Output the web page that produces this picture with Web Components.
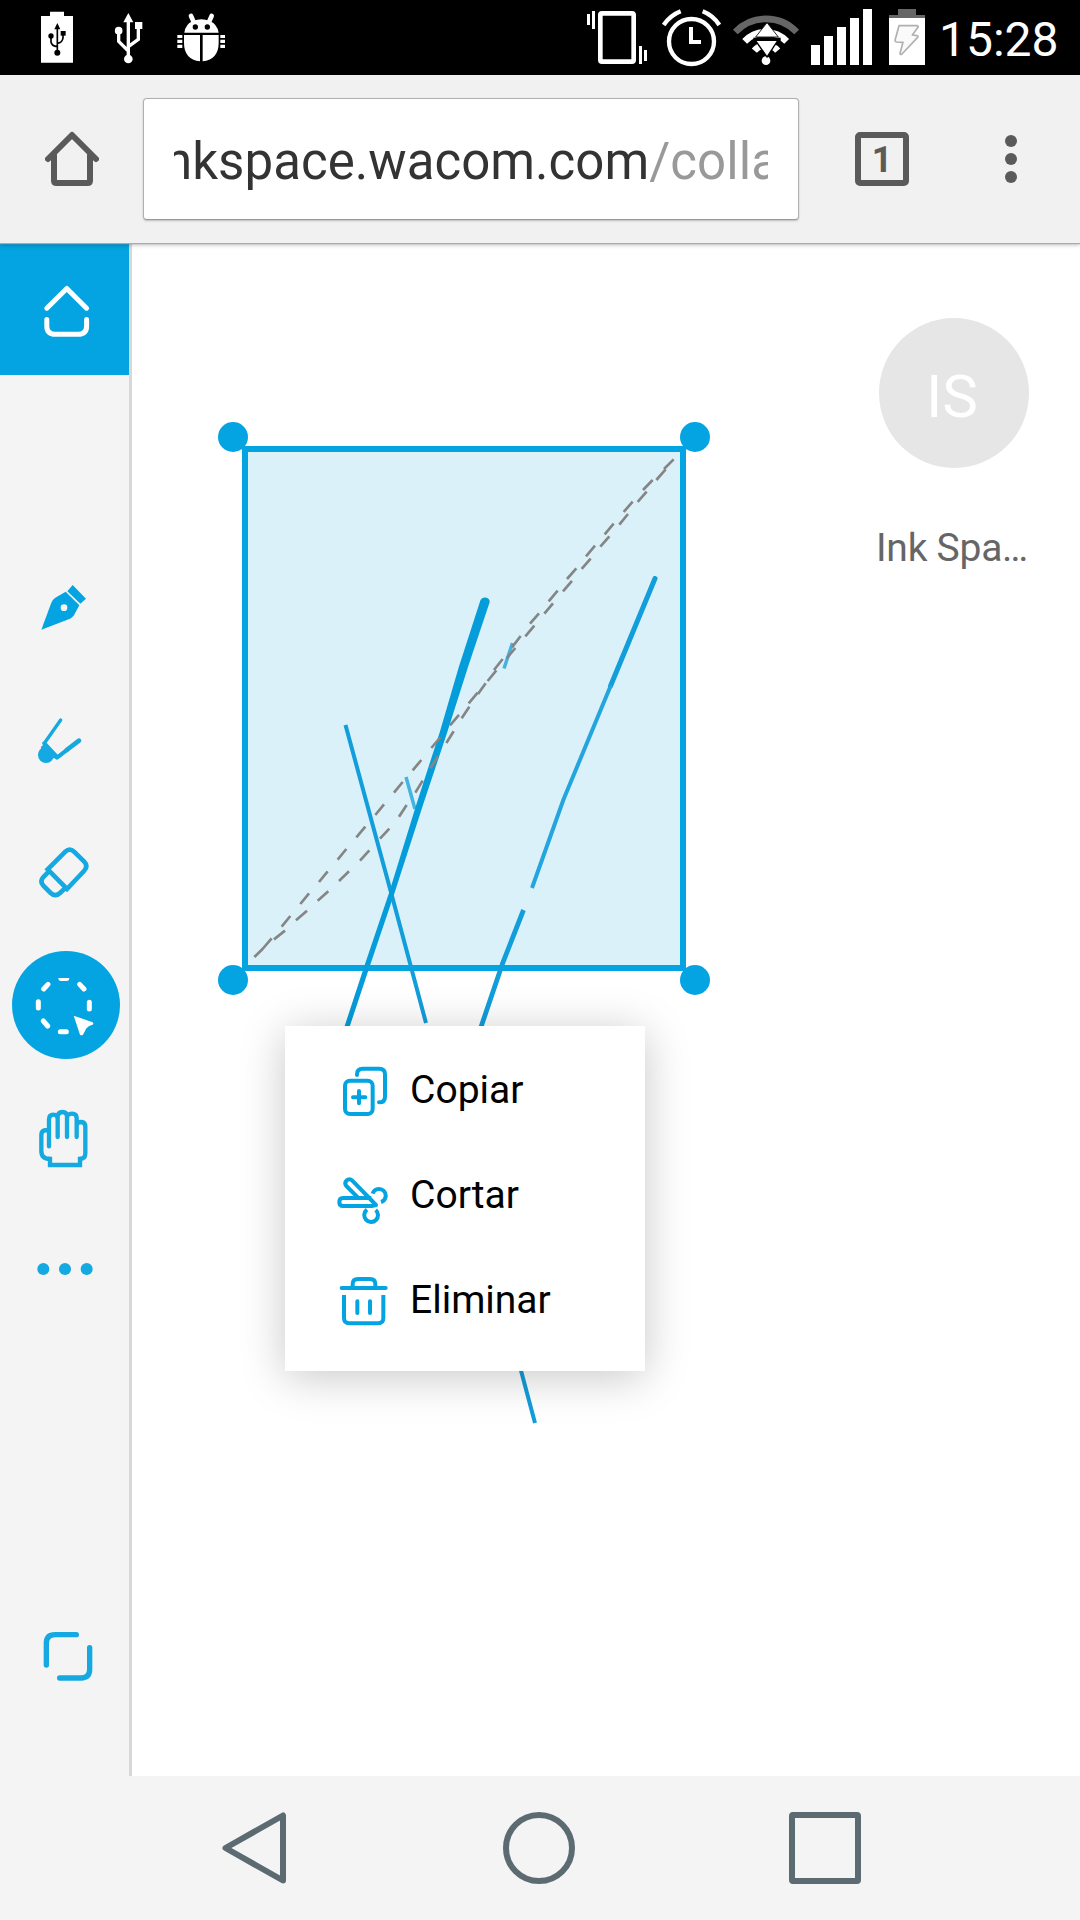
<!DOCTYPE html>
<html lang="es">
<head>
<meta charset="utf-8">
<title>Ink Space</title>
<style>
html,body{margin:0;padding:0}
body{width:1080px;height:1920px;overflow:hidden;background:#fff;font-family:Roboto,"Noto Sans",sans-serif}
</style>
</head>
<body>
<phone-screen>
  <status-bar time="15:28"></status-bar>
  <browser-bar tabs="1"><span slot="host">nkspace.wacom.com</span><span slot="path">/colla</span></browser-bar>
  <ink-workspace>
    <tool-bar slot="tools"></tool-bar>
    <ink-canvas slot="canvas">
      <user-badge slot="user" initials="IS">Ink Spa…</user-badge>
      <context-menu slot="menu">
        <menu-row icon="copy">Copiar</menu-row>
        <menu-row icon="cut">Cortar</menu-row>
        <menu-row icon="trash">Eliminar</menu-row>
      </context-menu>
    </ink-canvas>
  </ink-workspace>
  <nav-bar></nav-bar>
</phone-screen>
<script>
// name: [width px, height px, viewBox, markup]
const ICONS = {
  usbBattery: [34,75,'120 0 102 225', `<path fill="#fff" d="M123 48h27V35h42v13h27v140h-96z"/><g fill="none" stroke="#000" stroke-width="5"><path d="M172 82v76M153 108v18q2 12 19 14M189 100v14q-2 14-17 16"/></g><path d="M172 69l9 19h-18z"/><circle cx="153" cy="108" r="8"/><path d="M182 93h15v14h-15z"/><circle cx="172" cy="158" r="9"/>`],
  usb: [29,75,'342 0 87 225', `<g fill="none" stroke="#fff" stroke-width="10"><path d="M385 62v112M356 92v32l29 29M415 84v34l-30 22"/></g><g fill="#fff"><path d="M385 39l15 28h-30z"/><circle cx="356" cy="92" r="11.500"/><path d="M405 66h22v21h-22z"/><circle cx="385" cy="177" r="13"/></g>`],
  bug: [50,75,'528 0 150 225', `<g fill="#fff"><path d="M553 98Q556 72 580 62Q604 53 628 62Q652 72 656 98zM552 105h48v79Q552 178 552 128zM608 105h48v23Q656 178 608 184z"/><path d="M532 105h15v9h-15zM532 119h15v10h-15zM532 134h15v10h-15zM661 105h14v9h-14zM661 119h14v10h-14zM661 134h14v10h-14z"/></g><path d="M573 48l9 20M635 48l-9 20" stroke="#fff" stroke-width="14" stroke-linecap="round"/><circle cx="586" cy="81" r="8"/><circle cx="622" cy="81" r="8"/>`],
  vibrate: [62,75,'78 0 186 225', `<rect x="121" y="40" width="100" height="145" rx="5" fill="none" stroke="#fff" stroke-width="14"/><path fill="#fff" d="M81 42h9v33h-9zM96 33h9v54h-9zM237 138h9v54h-9zM252 150h9v33h-9z"/>`],
  alarm: [61,75,'303 0 183 225', `<g fill="none" stroke="#fff"><circle cx="394.500" cy="124.500" r="67.500" stroke-width="13"/><path stroke-width="12" d="M393 81v45h30"/><path stroke-width="13" d="M311 75Q331 46 362 34M428 34Q459 46 478 75"/></g>`],
  wifi: [68,75,'516 0 204 225', `<g fill="none" stroke-width="20"><path stroke="#666" d="M526 96A127 127 0 0 1 710 96"/><path stroke="#fff" d="M554 124A87 87 0 0 1 680 124"/><path stroke="#fff" d="M583 152A46 46 0 0 1 653 152"/></g><circle cx="618" cy="182" r="13" fill="#fff"/><path d="M580 113h82v9h-82z"/><path fill="#fff" stroke="#222" stroke-width="3" d="M621 68l34 43h-68z"/><path stroke="#000" stroke-width="10" d="M591 123h58l-28 43z"/><path fill="#fff" d="M590 123h60l-29 44z"/>`],
  signal: [63,75,'750 0 189 225', `<path fill="#fff" d="M753 135h27v60h-27zM792 108h27v87h-27zM831 81h27v114h-27zM870 54h27v141h-27zM909 27h27v168h-27z"/>`],
  battery: [38,75,'984 0 114 225', `<path fill="#666" d="M1014 27h54v18h27v9H987v-9h27z"/><path fill="#fff" d="M987 54h108v141H987z"/><path fill="#fafafa" stroke="#b0b0b0" stroke-width="5" stroke-linejoin="round" d="M1017 77h54q5 0 3 5l-17 23 14 2q5 1 2 5l-47 50q-5 4-6-2l9-33-20-1q-4-1-4-5z"/>`],
  home: [54,56,'45 131 54 56', `<path fill="none" stroke="#5a5a5a" stroke-width="6" stroke-linejoin="round" stroke-linecap="round" d="M48 159l24-24 24 24M54 155v25.500q0 2.500 2.500 2.500h31q2.500 0 2.500-2.500V155"/>`],
  inkHome: [129,132,'0 243 129 132', `<path fill="none" stroke="#fff" stroke-width="5" stroke-linejoin="round" stroke-linecap="round" d="M46.800 308.200L66.800 288.500l19.800 19.700M46.800 319.500v6.500q0 8.300 8.500 8.300h22.800q8.500 0 8.500-8.300v-6.500"/>`],
  pen: [129,132,'0 -60 387 396', `<g fill="#03a4e1"><path d="M124 209L154 128Q158 118 166 113L197 95l41 41-17 31Q217 172 210 176z"/><path d="M218 75l40 41-17 15-39-37z"/></g><circle cx="192" cy="143" r="10" fill="#f4f4f4"/>`],
  brush: [129,132,'0 336 387 396', `<g fill="#14a9e0"><circle cx="138" cy="585" r="24"/><path d="M126 548l8-6 42 45-6 12-8-5-22 8-18-40 8-8z"/></g><g stroke="#14a9e0" stroke-linecap="round"><path stroke-width="10" d="M182 480l-50 71"/><path stroke-width="12" d="M172 592l30-23"/><path stroke-width="14" d="M200 570l37-28"/></g>`],
  eraser: [129,132,'0 732 387 396', `<g fill="none" stroke="#14a9e0" stroke-width="14"><path stroke-linecap="round" d="M143 928L196 875Q209 862 222 875L252 904Q266 918 252 933L201 987z"/><path d="M149 932L130 951Q118 964 130 977L152 999Q166 1012 180 999L196 984"/></g>`],
  select: [129,132,'0 48 387 396', `<circle cx="198" cy="255" r="162" fill="#03a4e1"/><g stroke="#fff" stroke-width="15" stroke-linecap="round"><path d="M268 247v20M181 335h18M115 245v19M131 207l13-14M239 193l13 14M130 303l13 15"/></g><path fill="#fff" d="M175 174h33q0 9-8 9h-17q-8 0-8-9zM221 287l57 20q4 4 0 7-15 4-20 13l-9 17q-5 4-9 0z"/>`],
  hand: [129,132,'0 444 387 396', `<g fill="none" stroke="#14a9e0" stroke-width="13"><path stroke-linecap="round" stroke-linejoin="round" d="M147 679V598Q147 584 160 584Q173 584 173 596V651V590Q174 576 187 576Q201 576 201 590V651V594Q201 581 216 581Q230 581 230 594V651V614Q234 606 244 606Q256 607 256 620V700Q256 717 240 717M150 717Q124 717 124 693V645Q124 630 141 630"/><path d="M144 717h6v18h90v-18h6"/></g>`],
  dots: [129,132,'0 840 387 396', `<g fill="#14a9e0"><circle cx="130" cy="1047" r="18"/><circle cx="195" cy="1047" r="18"/><circle cx="260" cy="1047" r="18"/></g>`],
  expand: [129,132,'0 -30 387 396', `<path fill="none" stroke="#14a9e0" stroke-width="16" stroke-linecap="round" d="M139 195V130Q139 104 165 104H229M269 143V208Q269 234 243 234H179"/>`],
  copy: [57,57,'195 156 171 171', `<g fill="none" stroke="#03a4e1" stroke-width="12" stroke-linecap="round"><rect x="225" y="212" width="83" height="100" rx="15"/><path d="M267 243v37M249 262h37M261 195v-2Q261 176 278 176H328Q345 176 345 193V260Q345 277 327 277"/></g>`],
  cut: [57,57,'195 471 171 171', `<g fill="none" stroke="#03a4e1" stroke-width="12" stroke-linejoin="round"><path d="M264 563L229 528Q222 519 230 511Q239 504 247 512L318 585 305 588H219Q208 588 208 576Q208 564 219 564H304"/><path d="M308 551A20 20 0 1 1 333 576M291 599A20.500 20.500 0 1 0 317 600"/></g>`],
  trash: [57,57,'195 786 171 171', `<g fill="none" stroke="#03a4e1" stroke-width="12"><path stroke-linecap="round" d="M215 834H347M262 874v35M300 874v35"/><path d="M248 832V823Q248 807 264 807H300Q316 807 316 823V832M222 855V924Q222 940 238 940H324Q340 940 340 924V855"/></g>`],
  back: [64,72,'222 1812 64 72', `<path fill="none" stroke="#5c6a72" stroke-width="6" stroke-linejoin="round" d="M225.500 1848L283 1815.500v65z"/>`],
  circle: [72,72,'0 0 72 72', `<circle cx="36" cy="36" r="33" fill="none" stroke="#5c6a72" stroke-width="6"/>`],
  square: [72,72,'0 0 72 72', `<rect x="3" y="3" width="66" height="66" rx="1" fill="none" stroke="#5c6a72" stroke-width="6" stroke-linejoin="round"/>`]
};
class Base extends HTMLElement {
  constructor(){ super(); this.attachShadow({mode:'open'}); }
  connectedCallback(){ this.shadowRoot.innerHTML = this.view(); }
}
const def = (name, view) => customElements.define(name, class extends Base { view(){ return view(this); } });

def('ui-icon', el => { const [w,h,vb,m] = ICONS[el.getAttribute('name')];
  return `<style>:host{display:block;flex:none}svg{display:block}</style><svg width="${w}" height="${h}" viewBox="${vb}">${m}</svg>`; });

def('phone-screen', () => `<style>:host{display:flex;flex-direction:column;width:1080px;height:1920px}</style><slot></slot>`);

def('status-bar', el => `<style>
:host{display:flex;justify-content:space-between;height:75px;flex:none;background:#000;color:#fff}
div{display:flex}
.l{padding-left:40px}.l :nth-child(2){margin-left:40px}.l :nth-child(3){margin-left:33px}
.r{width:494px}
.g1{margin-left:13px}.g2{margin-left:10px}.g3{margin-left:15px}
span{font-size:48px;line-height:79px;margin-left:13px;white-space:nowrap}
</style>
<div class="l"><ui-icon name="usbBattery"></ui-icon><ui-icon name="usb"></ui-icon><ui-icon name="bug"></ui-icon></div>
<div class="r"><ui-icon name="vibrate"></ui-icon><ui-icon class="g1" name="alarm"></ui-icon><ui-icon class="g2" name="wifi"></ui-icon><ui-icon class="g2" name="signal"></ui-icon><ui-icon class="g3" name="battery"></ui-icon><span>${el.getAttribute('time')}</span></div>`);

def('browser-bar', el => `<style>
:host{display:flex;align-items:center;height:168px;flex:none;box-sizing:border-box;background:#f1f1f1;padding:0 63px 0 45px;box-shadow:0 1px 1px #aaa,0 2px 4px rgba(0,0,0,.25);position:relative;z-index:2}
.url{box-sizing:border-box;width:656px;height:122px;margin-left:44px;border:1px solid #b0b0b0;border-bottom-color:#999;border-radius:4px;background:#fff;padding:0 30px;box-shadow:0 1px 2px rgba(0,0,0,.22)}
.clip{overflow:hidden;height:120px;line-height:125px;font-size:51px;letter-spacing:.05px;white-space:nowrap;color:#333}
.txt{margin-left:-10px;display:block}
.path{color:#999}
.tab{box-sizing:border-box;width:54px;height:54px;border:6px solid #5a5a5a;border-radius:5px;margin-left:56px;font:bold 36px/44px Roboto,sans-serif;color:#5a5a5a;text-align:center}
.more{display:flex;flex-direction:column;gap:6px;margin-left:96px}
.more i{width:12px;height:12px;border-radius:50%;background:#5a5a5a}
</style><ui-icon name="home"></ui-icon>
<div class="url"><div class="clip"><span class="txt"><slot name="host"></slot><span class="path"><slot name="path"></slot></span></span></div></div>
<div class="tab">${el.getAttribute('tabs')}</div><div class="more"><i></i><i></i><i></i></div>`);

def('ink-workspace', () => `<style>:host{display:flex;height:1533px;flex:none}</style><slot name="tools"></slot><slot name="canvas"></slot>`);

def('tool-bar', () => `<style>
:host{display:flex;flex-direction:column;box-sizing:border-box;width:132px;flex:none;background:#f4f4f4;border-right:3px solid #d8d8d8}
.home{background:#03a4e1;margin-bottom:165px}.full{margin-top:auto;margin-bottom:54px}
</style><ui-icon class="home" name="inkHome"></ui-icon>
${['pen','brush','eraser','select','hand','dots'].map(n=>`<ui-icon name="${n}"></ui-icon>`).join('')}
<ui-icon class="full" name="expand"></ui-icon>`);

def('ink-canvas', () => {
  // The two sides of the lasso outline, in thirds of a pixel.
  const upper = 'M1421 178L1392 207M1358 240L1329 270M1298 305L1271 336M1241 371L1214 403M1185 437L1158 469M1129 505L1101 537M1073 572L1046 604M1017 640L990 671M962 708L936 742M908 777L882 810M857 850L834 882M808 920L785 955M761 994L739 1029M714 1069L691 1105M668 1142L646 1178M620 1215L597 1250M568 1286L540 1316M508 1351L480 1382M447 1414L417 1443M385 1474L353 1502M321 1532L288 1561M255 1592L222 1618M187 1648L163 1671';
  const lower = 'M1397 208L1369 240M1340 275L1313 306M1284 342L1258 374M1228 409L1201 440M1172 476L1145 507M1116 543L1089 574M1059 610L1033 641M1003 677L976 709M946 744L920 775M889 811L863 843M833 878L806 910M777 945L750 976M721 1012L694 1044M664 1080L638 1111M608 1146L582 1178M552 1213L526 1245M496 1280L469 1312M439 1347L413 1379M383 1414L357 1446M327 1480L301 1512M271 1548L245 1580M215 1615L185 1650';
  return `<style>
:host{display:block;width:948px;position:relative;background:#fff;overflow:hidden}
svg{display:block}
.ink{filter:blur(.7px)}
.user{display:flex;justify-content:flex-end;position:absolute;right:51px;top:75px}
.menu{position:absolute;left:153px;top:783px}
</style>
<svg width="948" height="1533" viewBox="132 243 948 1533">
<rect x="245" y="449" width="438" height="519" fill="#daf1fa" stroke="#03a4e1" stroke-width="6"/>
<g class="ink"><g fill="none" stroke="#129ddb" stroke-linecap="butt">
<path stroke-width="4" d="M345.500 725L392 896 426 1023"/>
<path stroke-width="3.500" stroke="#45b3e2" d="M406 777l9 32M512.500 643L504 668.500"/>
<path stroke-width="5" stroke-linecap="round" d="M655 578.500L610.500 686"/>
<path stroke-width="4" stroke="#25a5dd" d="M611 685L563.300 800 532 888"/>
<path stroke-width="4.800" d="M523.500 910L502.700 963 481 1027"/>
<path stroke-width="4" d="M519.500 1365L535 1423"/>
</g>
<path fill="#059cda" d="M480.500 600Q482 597 485.500 597.500Q489.700 598 489.700 602L468 667 447 733 423.300 804 394.500 893 369.500 967 349.200 1028H344L364 967 389 893 416.800 803 439.500 733 458.800 667z"/></g>
<g transform="translate(200 400) scale(.33333)" fill="none" stroke="#858585" stroke-width="8"><path d="${upper}"/><path d="${lower}"/></g>
<g fill="#03a4e1"><circle cx="233" cy="437" r="15"/><circle cx="695" cy="437" r="15"/><circle cx="233" cy="980" r="15"/><circle cx="695" cy="980" r="15"/></g>
</svg>
<div class="user"><slot name="user"></slot></div><div class="menu"><slot name="menu"></slot></div>`; });

def('user-badge', el => `<style>
:host{display:block;width:154px}
.a{box-sizing:border-box;width:150px;height:150px;padding-right:4px;margin-left:4px;border-radius:50%;background:#e6e6e6;color:#fff;font-size:60px;line-height:157px;text-align:center}
.n{margin-top:56px;padding-left:1px;font-size:39px;letter-spacing:-.25px;line-height:48px;color:#666;white-space:nowrap}
</style><div class="a">${el.getAttribute('initials')}</div><div class="n"><slot></slot></div>`);

def('context-menu', () => `<style>:host{display:flex;flex-direction:column;box-sizing:border-box;width:360px;height:345px;padding:12px 0 18px;background:#fff;box-shadow:0 6px 42px rgba(0,0,0,.22)}</style><slot></slot>`);
def('menu-row', el => `<style>:host{display:flex;align-items:center;height:105px;padding-left:50px;gap:18px;font-size:39px;line-height:46px;color:#000}span{padding-bottom:2px}</style><ui-icon name="${el.getAttribute('icon')}"></ui-icon><span><slot></slot></span>`);

def('nav-bar', () => `<style>:host{display:flex;align-items:center;box-sizing:border-box;height:144px;flex:none;padding-left:222px;background:#f4f4f4}
.c{margin-left:217px}.s{margin-left:214px}</style><ui-icon name="back"></ui-icon><ui-icon class="c" name="circle"></ui-icon><ui-icon class="s" name="square"></ui-icon>`);
</script>
</body>
</html>
